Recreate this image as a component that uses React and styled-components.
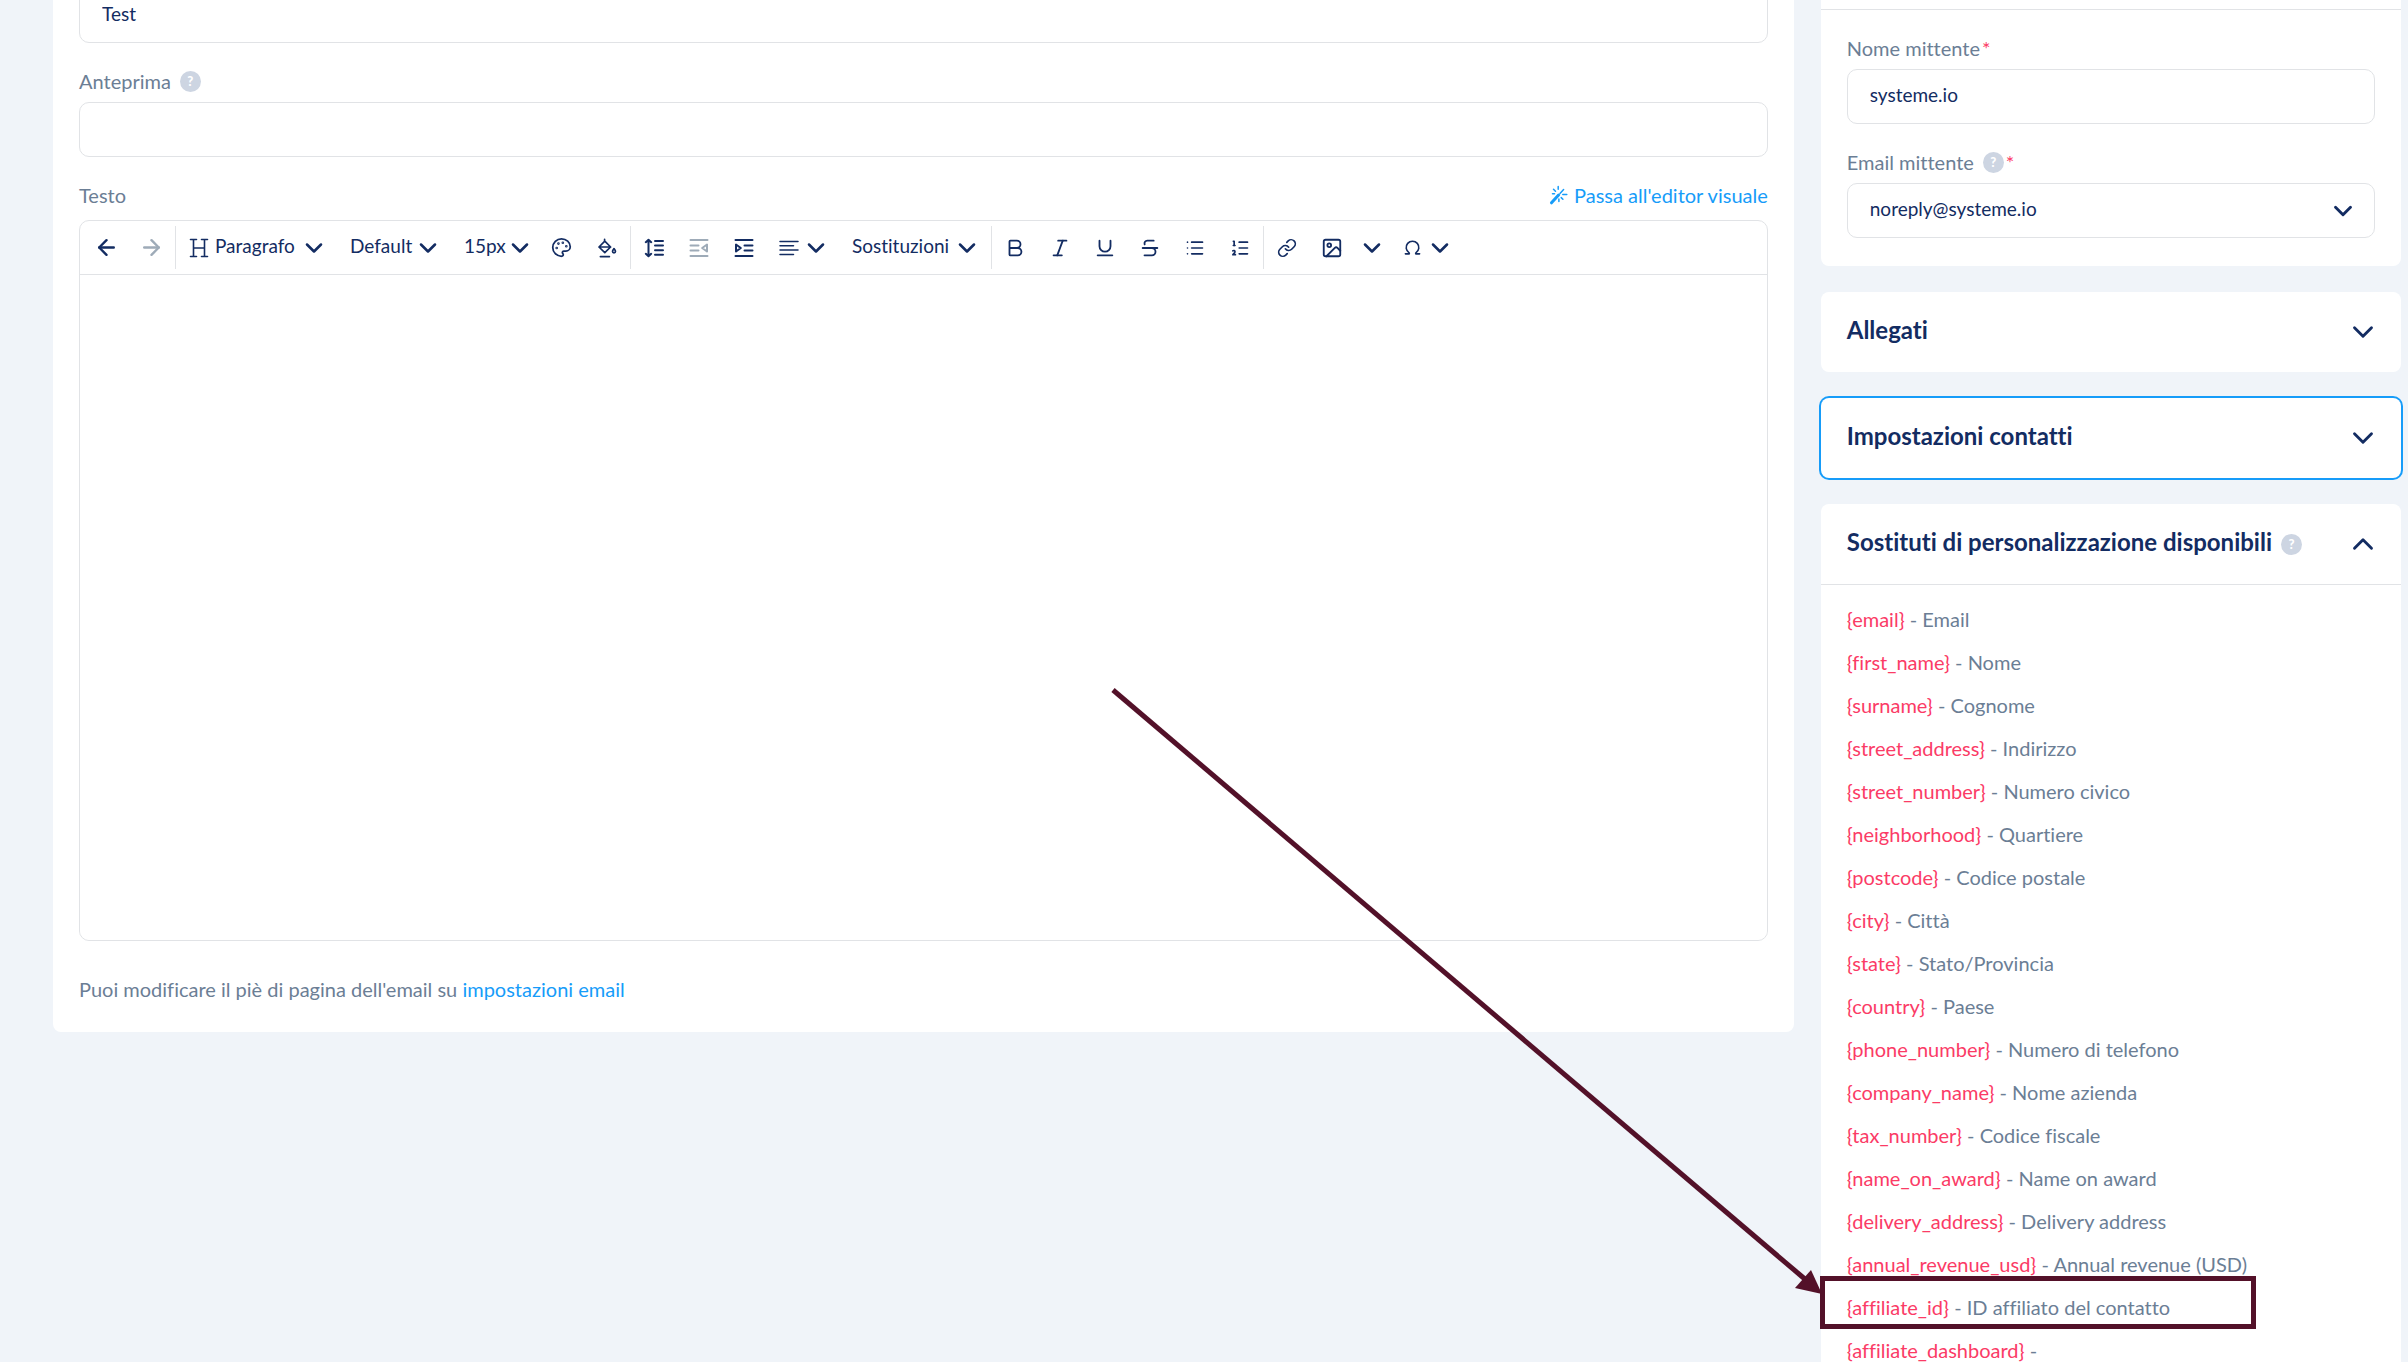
import React from 'react'
import styled, { createGlobalStyle, css } from 'styled-components'
import {
  ArrowLeft,
  ArrowRight,
  Bold,
  ChevronDown,
  ChevronUp,
  Image,
  Italic,
  Link,
  List,
  ListOrdered,
  Omega,
  Palette,
  Strikethrough,
  Underline,
} from 'lucide-react'

const colors = {
  page: '#f0f4f9',
  border: '#e1e3e6',
  text: '#132c62',
  label: '#6b7e95',
  muted: '#9eabb8',
  link: '#169cf9',
  variable: '#fb3b66',
  help: '#cdd5e2',
  mark: '#531129',
}

const substitutions = [
  ['email', 'Email'],
  ['first_name', 'Nome'],
  ['surname', 'Cognome'],
  ['street_address', 'Indirizzo'],
  ['street_number', 'Numero civico'],
  ['neighborhood', 'Quartiere'],
  ['postcode', 'Codice postale'],
  ['city', 'Città'],
  ['state', 'Stato/Provincia'],
  ['country', 'Paese'],
  ['phone_number', 'Numero di telefono'],
  ['company_name', 'Nome azienda'],
  ['tax_number', 'Codice fiscale'],
  ['name_on_award', 'Name on award'],
  ['delivery_address', 'Delivery address'],
  ['annual_revenue_usd', 'Annual revenue (USD)'],
  ['affiliate_id', 'ID affiliato del contatto'],
  ['affiliate_dashboard', ''],
]

const GlobalStyle = createGlobalStyle`
  * {
    box-sizing: border-box;
  }
  body {
    margin: 0;
    background: ${colors.page};
    color: ${colors.label};
    font-family: Lato, 'Open Sans', sans-serif;
    font-size: 20px;
    line-height: 24px;
    font-variant-ligatures: none;
  }
  button, input, select, textarea {
    font: inherit;
    font-size: 19px;
    font-variant-ligatures: none;
    color: ${colors.text};
  }
`

const Viewport = styled.div`
  position: relative;
  height: 100vh;
  overflow: hidden;
`

// the page is scrolled, so the top of both columns is cut off
const Page = styled.div`
  display: grid;
  grid-template-columns: minmax(0, 3fr) minmax(0, 1fr);
  align-items: start;
  gap: 27px;
  margin-top: -12px;
  padding: 0 7px 0 53px;
`

const Card = styled.section`
  background: #fff;
  border-radius: 8px;
  ${({ $focused }) => $focused && css`
    box-shadow: 0 0 0 2px ${colors.link};
  `}
`

const EditorCard = styled(Card)`
  padding: 0 26px 31px;
  border-top-left-radius: 0;
  border-top-right-radius: 0;
`

const Sidebar = styled.aside`
  display: flex;
  flex-direction: column;
  gap: 26px;
`

const SenderCard = styled(Card)`
  border-top-left-radius: 0;
  border-top-right-radius: 0;
`

const SenderHeader = styled.div`
  height: 22px;
  border-bottom: 1px solid ${colors.border};
`

const SenderFields = styled.div`
  padding: 0 26px 28px;
`

const FieldHead = styled.div`
  display: flex;
  align-items: center;
  gap: 9px;
  padding: 26px 0 9px;
`

const BodyHead = styled(FieldHead)`
  justify-content: space-between;
  padding-bottom: 13px;
`

const HelpIcon = styled.span`
  display: inline-flex;
  align-items: center;
  justify-content: center;
  flex: none;
  width: 21px;
  height: 21px;
  border-radius: 50%;
  background: ${colors.help};
  color: #fff;
  font-size: 13px;
  font-weight: 900;
`

const Required = styled.span`
  margin-left: -7px;
  color: ${colors.variable};
`

const inputStyle = css`
  display: block;
  width: 100%;
  height: 55px;
  padding: 0 22px 4px;
  border: 1px solid ${colors.border};
  border-radius: 10px;
  background: #fff;
  outline: none;
`

const Input = styled.input`
  ${inputStyle}
`

const Select = styled.select`
  ${inputStyle}
  appearance: none;
`

const SelectBox = styled.div`
  position: relative;
  color: ${colors.text};

  svg {
    position: absolute;
    right: 17px;
    top: 13px;
    pointer-events: none;
  }
`

const TextLink = styled.a`
  color: ${colors.link};
  text-decoration: none;
`

const SwitchLink = styled(TextLink)`
  display: flex;
  align-items: center;
  gap: 5px;
`

const Editor = styled.div`
  border: 1px solid ${colors.border};
  border-radius: 10px;
`

const Toolbar = styled.div`
  display: flex;
  align-items: center;
  height: 54px;
  padding-left: 4px;
  border-bottom: 1px solid ${colors.border};
`

const ToolGroup = styled.div`
  display: flex;
  align-items: center;
  height: 43px;

  & + & {
    margin-left: 1px;
    border-left: 1px solid ${colors.border};
  }
`

const ToolButton = styled.button`
  display: flex;
  align-items: center;
  justify-content: ${({ $wide }) => ($wide ? 'space-between' : 'center')};
  width: ${({ $width }) => $width || 45}px;
  height: 43px;
  padding: 0 ${({ $wide }) => ($wide ? 9 : 0)}px 0 ${({ $wide }) => ($wide ? 13 : 0)}px;
  border: 0;
  background: none;
  color: ${({ disabled }) => (disabled ? colors.muted : colors.text)};
  cursor: pointer;

  svg {
    flex: none;
  }
`

const ToolLabel = styled.span`
  display: flex;
  align-items: center;
  gap: 6px;
`

const ToolText = styled.span`
  padding-bottom: 3px;
`

const EditorBody = styled.textarea`
  display: block;
  width: 100%;
  height: 665px;
  padding: 20px;
  border: 0;
  border-radius: 0 0 10px 10px;
  outline: none;
  resize: none;
`

const Footnote = styled.p`
  margin: 36px 0 0;
`

const PanelHeader = styled.button`
  display: flex;
  align-items: center;
  justify-content: space-between;
  width: 100%;
  height: ${({ $open }) => ($open ? 81 : 80)}px;
  padding: 0 21px 0 26px;
  border: 0;
  border-bottom: ${({ $open }) => ($open ? `1px solid ${colors.border}` : 0)};
  background: none;
  font-size: 24px;
  font-weight: 700;
  cursor: pointer;
`

const PanelTitle = styled.span`
  display: flex;
  align-items: center;
  gap: 9px;
`

const PanelText = styled.span`
  padding-bottom: 4px;
`

const VariableList = styled.ul`
  margin: 0;
  padding: 13px 26px;
  list-style: none;
`

const VariableItem = styled.li`
  line-height: 43px;
  white-space: nowrap;
`

const Variable = styled.span`
  color: ${colors.variable};
`

const Annotation = styled.svg`
  position: absolute;
  top: 0;
  left: 0;
  width: 2408px;
  height: 1362px;
  pointer-events: none;
`

function Glyph({ children, width = 1.8 }) {
  return (
    <svg
      width="20"
      height="20"
      viewBox="0 0 20 20"
      fill="none"
      stroke="currentColor"
      strokeWidth={width}
      strokeLinecap="round"
      strokeLinejoin="round"
      aria-hidden="true"
    >
      {children}
    </svg>
  )
}

const HeadingIcon = () => (
  <Glyph width={1.6}>
    <path d="M1.5 1.5h6M12.5 1.5h6M1.5 18.5h6M12.5 18.5h6M4.5 1.5v17M15.5 1.5v17M4.5 10h11" />
  </Glyph>
)

const FillIcon = () => (
  <Glyph width={1.7}>
    <path d="M7.6 1.4v2M2 9l5.8-5.8L13.6 9l-5.8 5.6zM2 9h11.6M3.4 18.6h9" />
    <path d="M17 10.6c1 1.3 1.5 2 1.5 2.7a1.5 1.5 0 0 1-3 0c0-.7.5-1.4 1.5-2.7z" />
  </Glyph>
)

const LineHeightIcon = () => (
  <Glyph width={2}>
    <path d="M4.5 2v16M1.8 4.2l2.7-2.4 2.7 2.4M1.8 15.8l2.7 2.4 2.7-2.4" />
    <path d="M11 3h8M11 7.6h8M11 12.2h8M11 16.8h8" />
  </Glyph>
)

const OutdentIcon = () => (
  <Glyph width={2}>
    <path d="M1.5 2h17M1.5 7.4h8M1.5 12.6h8M1.5 18h17M18 6.5v7L13.2 10z" />
  </Glyph>
)

const IndentIcon = () => (
  <Glyph width={2}>
    <path d="M1.5 2h17M10.5 7.4h8M10.5 12.6h8M1.5 18h17M2 6.5v7L6.8 10z" />
  </Glyph>
)

const AlignIcon = () => (
  <Glyph width={1.5}>
    <path d="M1 3.5h18M1 7.8h13.5M1 12.1h18M1 16.4h13.5" />
  </Glyph>
)

const WandIcon = () => (
  <Glyph width={1.5}>
    <path d="M2.5 17.8 9.6 10" strokeWidth="3" />
    <path d="m11 8.6 3.6-4M9.2 1.5v2.7M4.5 4.2l2 2M3.5 8.8h2M13.8 9.6h4M12.2 12.6l1.7 1.7M9.9 14v2.5" />
  </Glyph>
)

const icon = { size: 22, strokeWidth: 2, 'aria-hidden': true }
const chevron = { size: 28, strokeWidth: 2.2, 'aria-hidden': true }

function Dropdown({ label, icon: Icon, width }) {
  return (
    <ToolButton type="button" $wide $width={width}>
      <ToolLabel>
        {Icon && <Icon />}
        <ToolText>{label}</ToolText>
      </ToolLabel>
      <ChevronDown {...chevron} />
    </ToolButton>
  )
}

function EditorToolbar() {
  return (
    <Toolbar role="toolbar">
      <ToolGroup>
        <ToolButton type="button" aria-label="Annulla">
          <ArrowLeft size={25} strokeWidth={2.3} />
        </ToolButton>
        <ToolButton type="button" aria-label="Ripeti" disabled>
          <ArrowRight size={25} strokeWidth={2.3} />
        </ToolButton>
      </ToolGroup>
      <ToolGroup>
        <Dropdown label="Paragrafo" icon={HeadingIcon} width={161} />
        <Dropdown label="Default" width={114} />
        <Dropdown label="15px" width={88} />
        <ToolButton type="button" aria-label="Colore testo">
          <Palette {...icon} size={21} />
        </ToolButton>
        <ToolButton type="button" aria-label="Colore sfondo">
          <FillIcon />
        </ToolButton>
      </ToolGroup>
      <ToolGroup>
        <ToolButton type="button" aria-label="Interlinea">
          <LineHeightIcon />
        </ToolButton>
        <ToolButton type="button" aria-label="Riduci rientro" disabled>
          <OutdentIcon />
        </ToolButton>
        <ToolButton type="button" aria-label="Aumenta rientro">
          <IndentIcon />
        </ToolButton>
        <ToolButton type="button" aria-label="Allineamento" $wide $width={73}>
          <AlignIcon />
          <ChevronDown {...chevron} />
        </ToolButton>
        <Dropdown label="Sostituzioni" width={151} />
      </ToolGroup>
      <ToolGroup>
        <ToolButton type="button" aria-label="Grassetto">
          <Bold {...icon} />
        </ToolButton>
        <ToolButton type="button" aria-label="Corsivo">
          <Italic {...icon} />
        </ToolButton>
        <ToolButton type="button" aria-label="Sottolineato">
          <Underline {...icon} />
        </ToolButton>
        <ToolButton type="button" aria-label="Barrato">
          <Strikethrough {...icon} />
        </ToolButton>
        <ToolButton type="button" aria-label="Elenco puntato">
          <List {...icon} size={20} />
        </ToolButton>
        <ToolButton type="button" aria-label="Elenco numerato">
          <ListOrdered {...icon} size={20} />
        </ToolButton>
      </ToolGroup>
      <ToolGroup>
        <ToolButton type="button" aria-label="Link">
          <Link {...icon} size={20} />
        </ToolButton>
        <ToolButton type="button" aria-label="Immagine">
          <Image {...icon} />
        </ToolButton>
        <ToolButton type="button" aria-label="Opzioni immagine" $width={36}>
          <ChevronDown {...chevron} />
        </ToolButton>
        <ToolButton type="button" aria-label="Caratteri speciali" $wide $width={73}>
          <Omega {...icon} size={19} />
          <ChevronDown {...chevron} />
        </ToolButton>
      </ToolGroup>
    </Toolbar>
  )
}

function Panel({ title, help, open, focused, children }) {
  return (
    <Card $focused={focused}>
      <PanelHeader type="button" aria-expanded={Boolean(open)} $open={open}>
        <PanelTitle>
          <PanelText>{title}</PanelText>
          {help && <HelpIcon>?</HelpIcon>}
        </PanelTitle>
        {open ? (
          <ChevronUp size={34} strokeWidth={2} />
        ) : (
          <ChevronDown size={34} strokeWidth={2} />
        )}
      </PanelHeader>
      {children}
    </Card>
  )
}

export default function App() {
  return (
    <Viewport>
      <GlobalStyle />
      <Page>
        <EditorCard as="main">
          <Input aria-label="Oggetto" defaultValue="Test" />
          <FieldHead>
            <label htmlFor="preview">Anteprima</label>
            <HelpIcon>?</HelpIcon>
          </FieldHead>
          <Input id="preview" />
          <BodyHead>
            <label htmlFor="body">Testo</label>
            <SwitchLink href="#visual">
              <WandIcon />
              Passa all'editor visuale
            </SwitchLink>
          </BodyHead>
          <Editor>
            <EditorToolbar />
            <EditorBody id="body" />
          </Editor>
          <Footnote>
            Puoi modificare il piè di pagina dell'email su{' '}
            <TextLink href="#settings">impostazioni email</TextLink>
          </Footnote>
        </EditorCard>

        <Sidebar>
          <SenderCard>
            <SenderHeader />
            <SenderFields>
              <FieldHead>
                <label htmlFor="sender-name">Nome mittente</label>
                <Required>*</Required>
              </FieldHead>
              <Input id="sender-name" defaultValue="systeme.io" />
              <FieldHead>
                <label htmlFor="sender-email">Email mittente</label>
                <HelpIcon>?</HelpIcon>
                <Required>*</Required>
              </FieldHead>
              <SelectBox>
                <Select id="sender-email">
                  <option>noreply@systeme.io</option>
                </Select>
                <ChevronDown size={30} strokeWidth={2.3} />
              </SelectBox>
            </SenderFields>
          </SenderCard>
          <Panel title="Allegati" />
          <Panel title="Impostazioni contatti" focused />
          <Panel title="Sostituti di personalizzazione disponibili" help open>
            <VariableList>
              {substitutions.map(([name, description]) => (
                <VariableItem key={name}>
                  <Variable>{`{${name}}`}</Variable> - {description}
                </VariableItem>
              ))}
            </VariableList>
          </Panel>
        </Sidebar>
      </Page>

      <Annotation viewBox="0 0 2408 1362" fill="none" stroke={colors.mark} strokeWidth="5">
        <path d="M1113 690 1806 1280" />
        <path d="M1822 1294 1795 1288 1811 1270z" fill={colors.mark} stroke="none" />
        <rect x="1822.5" y="1278.5" width="431" height="48" />
      </Annotation>
    </Viewport>
  )
}
